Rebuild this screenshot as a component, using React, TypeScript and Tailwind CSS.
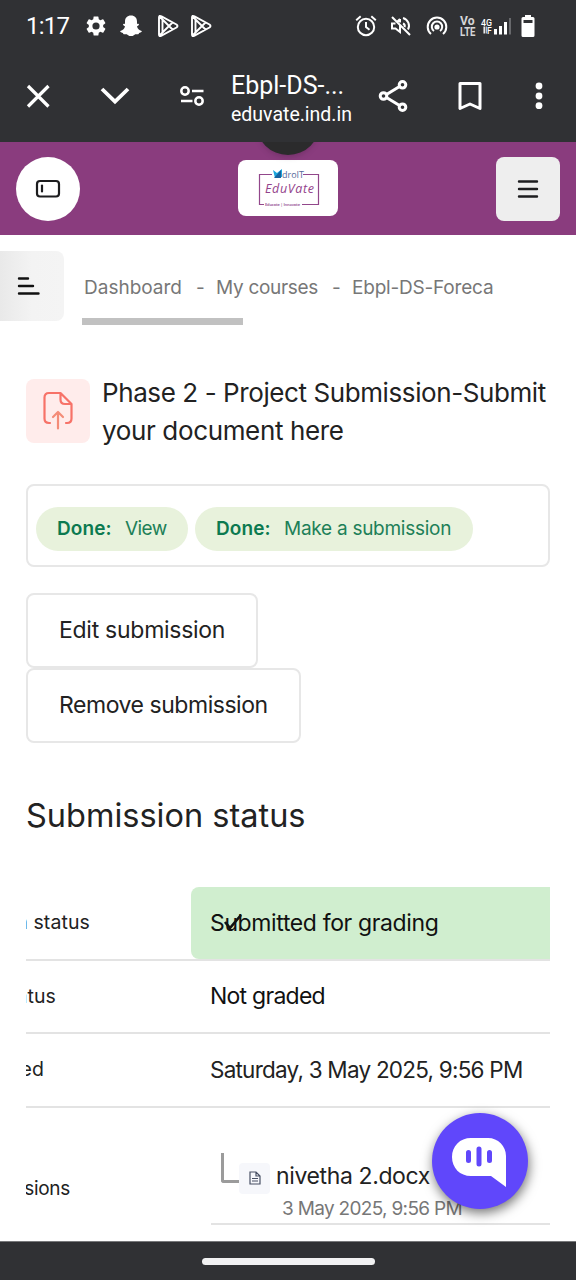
import type { ReactNode } from "react";

function StatusBar() {
  return (
    <div className="flex h-[50px] items-center pt-[2px]">
      <span className="ml-[26px] w-[60px] font-['Roboto'] text-[24px] tracking-[-0.8px]">1:17</span>
      <svg className="-ml-[2px]" width="24" height="24" viewBox="0 0 24 24" fill="#fff">
        <path d="M19.14 12.94c.04-.3.06-.61.06-.94 0-.32-.02-.64-.07-.94l2.03-1.58a.49.49 0 0 0 .12-.61l-1.92-3.32a.49.49 0 0 0-.59-.22l-2.39.96c-.5-.38-1.03-.7-1.62-.94l-.36-2.54a.48.48 0 0 0-.48-.41h-3.84c-.24 0-.43.17-.47.41l-.36 2.54c-.59.24-1.13.57-1.62.94l-2.39-.96c-.22-.08-.47 0-.59.22L2.74 8.87c-.12.21-.08.47.12.61l2.03 1.58c-.05.3-.09.63-.09.94s.02.64.07.94l-2.03 1.58a.49.49 0 0 0-.12.61l1.92 3.32c.12.22.37.29.59.22l2.39-.96c.5.38 1.03.7 1.62.94l.36 2.54c.05.24.24.41.48.41h3.84c.24 0 .44-.17.47-.41l.36-2.54c.59-.24 1.13-.56 1.62-.94l2.39.96c.22.08.47 0 .59-.22l1.92-3.32a.48.48 0 0 0-.12-.61zM12 15.6a3.6 3.6 0 1 1 0-7.2 3.6 3.6 0 0 1 0 7.2" />
      </svg>
      <svg className="ml-[11px]" width="24" height="24" viewBox="0 0 24 24" fill="#fff">
        <path d="M12 1.5c3.8 0 6 2.5 6 6v2.600c.8-.4 2-.3 2 .5s-1.200 1.300-2 1.700c.5 2.400 2 4 4.700 4.800.5.6-.5 1.500-2.600 1.900-.4.5-.2 1.200-.9 1.300-1.200.1-2.700-.4-4 .6-2 1.600-4.400 1.600-6.400 0-1.300-1-2.800-.5-4-.6-.7-.1-.5-.8-.9-1.300-2.100-.4-3.100-1.300-2.600-1.900C4 16.300 5.500 14.700 6 12.300c-.8-.4-2-.9-2-1.700s1.200-.9 2-.5V7.500c0-3.500 2.200-6 6-6z" />
      </svg>
      <PlayIcon className="ml-[13px]" />
      <PlayIcon className="ml-[9px]" />
      <svg className="ml-[142px]" width="22" height="22" viewBox="0 0 22 22" fill="none" stroke="#fff" strokeWidth="2">
        <circle cx="11" cy="12" r="8.200" />
        <path d="M11 7v5l3.500 2.800M1.200 5.200 5.700 1.300M20.800 5.200l-4.500-3.900" />
      </svg>
      <svg className="ml-[13px]" width="22" height="22" viewBox="0 0 22 22" fill="none" stroke="#fff" strokeWidth="2">
        <path d="M2 2l18 18M10 4 7.500 6.500M10 10v7l-4.500-3.500H2v-5h3.500M10 4v3.500M13 8.500c1.600.7 2 2.300 1.600 3.600M13 3c5 1.500 7.500 7 5 11.500" />
      </svg>
      <svg className="ml-[14px]" width="22" height="22" viewBox="0 0 22 22" fill="none" stroke="#fff" strokeWidth="2">
        <path d="M5 19a9.300 9.300 0 1 1 12 0M8 16a5.200 5.200 0 1 1 6 0" />
        <circle cx="11" cy="12" r="1.600" fill="#fff" />
      </svg>
      <svg className="ml-[11px]" width="66" height="22" viewBox="0 0 66 22" fill="#fff" fontFamily="Roboto">
        <g fill="#d6d6d8" fontWeight="bold" fontSize="12.500">
          <text x="1" y="9.500" textLength="14.500" lengthAdjust="spacingAndGlyphs">Vo</text>
          <text x="1" y="20.500" textLength="15.500" lengthAdjust="spacingAndGlyphs">LTE</text>
        </g>
        <text x="22" y="11" fontSize="9.500" fontWeight="500" textLength="11" lengthAdjust="spacingAndGlyphs">4G</text>
        <text x="28" y="18.800" fontSize="8.500" fontWeight="500">F</text>
        <path d="M24.500 11.500h1.400v7h-1.400zM26.700 11.500h1v7h-1z" />
        <path d="M35 14h3v5.500h-3zM40 11h3v8.500h-3zM45 7h3v12.500h-3z" />
        <path d="M50 3h2v16.500h-2z" fill="#68696c" />
      </svg>
      <svg className="-ml-[4px]" width="14" height="22" viewBox="0 0 14 22">
        <path d="M4 0h6v2h2q1.500 0 1.500 1.500v17q0 1.500-1.500 1.500H2Q.5 22 .5 20.500v-17Q.5 2 2 2h2z" fill="#fff" />
        <path d="M2.500 5h9v3h-9z" fill="#303134" />
      </svg>
    </div>
  );
}

function PlayIcon({ className }: { className: string }) {
  return (
    <svg className={className} width="24" height="24" viewBox="0 0 24 24" fill="none" stroke="#fff" strokeWidth="1.900" strokeLinejoin="round">
      <path d="M3 3.500Q3 1 5.500 2.300L20.500 10.500Q22.500 12 20.500 13.500L5.500 21.700Q3 23 3 20.500zM3.500 2.500 16.500 15.500M3.500 21.500 16.500 8.500M6.500 6v12" />
    </svg>
  );
}

function BrowserBar() {
  return (
    <div className="flex h-[92px] items-center text-white">
      <svg className="ml-[26px]" width="24" height="24" viewBox="0 0 24 24" fill="none" stroke="#fff" strokeWidth="3.200">
        <path d="m2 2 20.500 20.500M22.500 2 2 22.500" />
      </svg>
      <svg className="ml-[50px]" width="30" height="20" viewBox="0 0 30 20" fill="none" stroke="#fff" strokeWidth="3.800">
        <path d="m2 3 13 12.500L28 3" />
      </svg>
      <svg className="ml-[49px]" width="26" height="22" viewBox="0 0 26 22" fill="none" stroke="#fff" strokeWidth="2.500">
        <circle cx="6" cy="6" r="3.700" />
        <circle cx="20" cy="16" r="3.700" />
        <path d="M13 6h11.500M2 16h11.500" />
      </svg>
      <div className="ml-[26px] w-[124px] pt-[6px] font-['Roboto'] whitespace-nowrap">
        <div className="h-[30px] text-[25px] leading-[30px]">Ebpl-DS-...</div>
        <div className="h-[27px] text-[19.500px] leading-[27px]">eduvate.ind.in</div>
      </div>
      <svg className="ml-[23px]" width="30" height="34" viewBox="0 0 30 34" fill="none" stroke="#fff" strokeWidth="3">
        <path d="M6 17 24 6M6 17l18 11" />
        <g fill="#303134">
          <circle cx="5.500" cy="17" r="3.300" />
          <circle cx="24.500" cy="5.800" r="3.300" />
          <circle cx="24.500" cy="28.200" r="3.300" />
        </g>
      </svg>
      <svg className="ml-[50px]" width="24" height="30" viewBox="0 0 24 30" fill="none" stroke="#fff" strokeWidth="3" strokeLinejoin="round">
        <path d="M2 2.500h20v25L12 23 2 27.500z" />
      </svg>
      <svg className="ml-[53px]" width="8" height="28" viewBox="0 0 8 28" fill="#fff">
        <circle cx="4" cy="4" r="3.400" />
        <circle cx="4" cy="14" r="3.400" />
        <circle cx="4" cy="23.700" r="3.400" />
      </svg>
    </div>
  );
}

function Logo() {
  return (
    <div className="mb-[2px] flex h-[56px] w-[100px] items-center justify-center rounded-lg bg-white">
      <svg width="100" height="56" viewBox="0 0 100 56">
        <path d="M34 14.500H21.500v30H26M65 14.500h15.500v30H64" fill="none" stroke="#92478b" strokeWidth="1.200" />
        <path d="m35 10 4 3 5-4v8l-7 1z" fill="#1ba5dc" />
        <path d="m36 18 7-8v8z" fill="#17629f" />
        <text x="44" y="17.500" fontFamily="Open Sans" fontSize="9.500" fill="#55699a" textLength="22" lengthAdjust="spacingAndGlyphs">droIT</text>
        <text x="27" y="33" fontFamily="Open Sans" fontStyle="italic" fontSize="12.500" fill="#93428b" textLength="49">EduVate</text>
        <text x="27" y="46" fontFamily="Open Sans" fontWeight="bold" fontSize="4" fill="#a46a9f" textLength="35">Educate | Innovate</text>
      </svg>
    </div>
  );
}

function SiteHeader() {
  return (
    <header className="relative flex h-[93px] items-center justify-between overflow-hidden bg-[#8a3c7e] px-4">
      <div className="absolute -top-[51px] left-[256px] size-[64px] rounded-full bg-[#2b2b2c] shadow-md" />
      <div className="flex size-16 items-center justify-center rounded-full bg-white">
        <svg width="26" height="20" viewBox="0 0 26 20" fill="none" stroke="#1d1d1f" strokeWidth="2.200" strokeLinecap="round">
          <rect x="2" y="2" width="22" height="15.500" rx="3" />
          <path d="M7 6.500v6" />
        </svg>
      </div>
      <Logo />
      <div className="flex size-16 items-center justify-center rounded-lg bg-[#eeeeee]">
        <svg width="22" height="20" viewBox="0 0 22 20" stroke="#1d1d1f" strokeWidth="2.400" strokeLinecap="round">
          <path d="M2 2.500h18M2 10h18M2 17.500h18" />
        </svg>
      </div>
    </header>
  );
}

function Breadcrumbs() {
  return (
    <div className="flex pt-[16px]">
      <div className="flex h-[70px] w-[64px] items-center rounded-r-lg bg-linear-to-r from-[#e9e9e9] via-[#f3f3f3] to-[#f4f4f4]">
        <svg className="ml-[17px]" width="24" height="20" viewBox="0 0 24 20" stroke="#111" strokeWidth="2.400" strokeLinecap="round">
          <path d="M2 2.500h9M2 10h14M2 17.500h19.500" />
        </svg>
      </div>
      <div className="pt-[24px] pl-[18px]">
        <div className="flex h-[26px] items-center pl-[2px] text-[19px] whitespace-nowrap text-[#777777]">
          <span className="w-[112px]">Dashboard</span>
          <span className="w-[20px]">-</span>
          <span className="w-[116px] tracking-[-0.3px]">My courses</span>
          <span className="w-[20px]">-</span>
          <span className="tracking-[-0.2px]">Ebpl-DS-Foreca</span>
        </div>
        <div className="mt-[17px] h-[7px] w-[161px] bg-[#c1c1c1]" />
      </div>
    </div>
  );
}

function Pill({ className, children }: { className: string; children: ReactNode }) {
  return (
    <div className={`flex h-[44px] items-center rounded-full bg-[#e8f2dc] pt-px pl-[21px] text-[19px] whitespace-nowrap text-[#1d8058] ${className}`}>
      <span className="w-[68px] font-semibold tracking-[0.1px] text-[#0c7a50]">Done:</span>
      {children}
    </div>
  );
}

function Row({ label, width, children }: { label: string; width: string; children: ReactNode }) {
  return (
    <div className="flex h-[73.500px] border-b-2 border-[#e3e3e3]">
      <div className="flex w-[165px] items-center text-[19.500px]">
        <div className={`flex justify-end overflow-hidden tracking-[0.1px] ${width}`}>
          <span>{label}</span>
        </div>
      </div>
      {children}
    </div>
  );
}

function ChatButton() {
  return (
    <div className="absolute top-[1113px] left-[432px] size-[96px] rounded-full bg-[#6047fb] shadow-[1px_4px_12px_rgba(0,0,0,0.55)]">
      <svg width="96" height="96" viewBox="0 0 96 96">
        <path d="M39 25h17c10 0 18 8 18 18v31L59 63H39c-11 0-19-8-19-19s8-19 19-19z" fill="#fff" />
        <path d="M36.500 39.500v8M47 36v15M57.500 39.500v8" stroke="#6047fb" strokeWidth="5" strokeLinecap="round" />
      </svg>
    </div>
  );
}

export default function App() {
  return (
    <div className="relative flex h-[1280px] w-[576px] flex-col overflow-hidden bg-white font-['Inter',sans-serif] text-[#222222]">
      <div className="bg-[#303134] text-white">
        <StatusBar />
        <BrowserBar />
      </div>
      <SiteHeader />
      <Breadcrumbs />
      <main className="px-[26px]">
        <div className="flex pt-[49px]">
          <div className="mt-[5px] flex size-[64px] items-center justify-center rounded-lg bg-[#ffeceb]">
            <svg className="-mt-[2px]" width="32" height="40" viewBox="0 0 32 40" fill="none" stroke="#f77268" strokeWidth="2.200" strokeLinecap="round" strokeLinejoin="round">
              <path d="M8 33H7q-4.500 0-4.500-4.500V7.500Q2.500 3 7 3h11.500L29.500 14v14.500Q29.500 33 25 33h-1M18.500 3v6.500Q18.500 14 23 14h6.500" />
              <path d="M16 38.500V23M11 27l5-5 5 5" stroke="#f48c78" />
            </svg>
          </div>
          <h1 className="ml-[12px] text-[26px] leading-[38px] whitespace-nowrap">
            <span className="block tracking-[-0.410px]">Phase 2 - Project Submission-Submit</span>
            <span className="block tracking-[-0.360px]">your document here</span>
          </h1>
        </div>
        <div className="mt-[34px] flex h-[83px] items-center gap-[7px] rounded-lg border-2 border-[#e7e7e7] pt-[7px] pl-[8px]">
          <Pill className="w-[152px]"><span className="tracking-[-0.6px]">View</span></Pill>
          <Pill className="w-[278px]"><span className="tracking-[-0.270px]">Make a submission</span></Pill>
        </div>
        <div className="mt-[26px] flex flex-col items-start text-[23px] whitespace-nowrap">
          <div className="flex h-[75px] w-[232px] items-center rounded-lg border-2 border-[#e7e7e7] pl-[31px] tracking-[-0.270px]">Edit submission</div>
          <div className="flex h-[75px] w-[275px] items-center rounded-lg border-2 border-[#e7e7e7] pl-[31px] tracking-[-0.460px]">Remove submission</div>
        </div>
        <h2 className="mt-[51px] h-[44px] text-[32.500px] leading-[44px] whitespace-nowrap">Submission status</h2>
        <div className="mt-[49px] text-[23px] whitespace-nowrap">
          <Row label="Submission status" width="w-[64px]">
            <div className="relative flex flex-1 items-center rounded-l-lg bg-[#d0eecf] pl-[19px] tracking-[-0.370px] text-[#111]">
              Submitted for grading
              <svg className="absolute top-[26px] left-[32px]" width="20" height="20" viewBox="0 0 20 20" fill="none" stroke="#111" strokeWidth="2.700">
                <path d="m2 9 5 6L18 2" />
              </svg>
            </div>
          </Row>
          <Row label="Grading status" width="w-[30px]">
            <div className="flex items-center pl-[19px] tracking-[-0.750px] text-[#111]">Not graded</div>
          </Row>
          <Row label="Last modified" width="w-[18px]">
            <div className="flex items-center pl-[19px] text-[22.500px] tracking-[-0.770px]">Saturday, 3 May 2025, 9:56 PM</div>
          </Row>
          <div className="flex h-[117px]">
            <div className="w-[185px] pt-[68px] text-[19px] leading-[26px]">
              <div className="flex w-[44px] justify-end overflow-hidden tracking-[-0.300px]">
                <span>File submissions</span>
              </div>
            </div>
            <div className="flex flex-1 border-b-2 border-[#e3e3e3] pt-[45px] pl-[10px]">
              <div className="h-[30px] w-[18px] rounded-bl-[3px] border-b-[3px] border-l-[3px] border-[#9b9b9b]" />
              <div className="mt-[10px] flex size-[31px] items-center justify-center rounded bg-[#f6f7fb]">
                <svg width="12" height="14" viewBox="0 0 12 14" fill="none" stroke="#485064" strokeWidth="1.200">
                  <path d="M1 1h6l4 4v8H1zM7 1v4h4M3 7.500h6M3 10h6" />
                </svg>
              </div>
              <div className="ml-[6px]">
                <div className="h-[40px] leading-[46px] tracking-[-0.380px]">nivetha 2.docx</div>
                <div className="pt-[2px] pl-[6px] text-[19px] leading-[28px] tracking-[-0.680px] text-[#777]">3 May 2025, 9:56 PM</div>
              </div>
            </div>
          </div>
        </div>
      </main>
      <ChatButton />
      <footer className="absolute bottom-0 left-0 flex h-[39px] w-full items-center justify-center border-t border-[#77787a] bg-[#303134]">
        <div className="h-[7px] w-[173px] rounded-full bg-[#f1f1f2]" />
      </footer>
    </div>
  );
}
